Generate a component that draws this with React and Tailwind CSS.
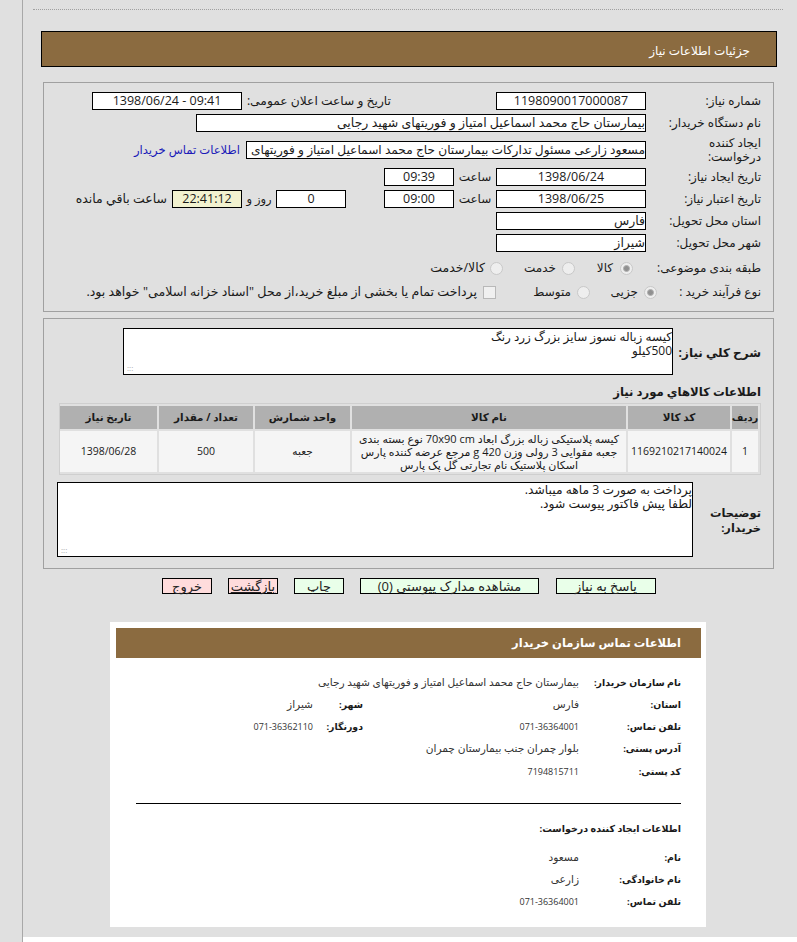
const Box = ({ w, children, align = "center", bg = "bg-white" }) => (
  <div className={`${w} h-[18px] shrink-0 border border-black ${bg} text-[12.5px] leading-[16px] overflow-hidden whitespace-nowrap ${align === "center" ? "text-center" : "text-right"}`}>
    {children}
  </div>
);

const Radio = ({ checked }) => (
  <span className="w-[13px] h-[13px] shrink-0 rounded-full border border-[#c8c8c8] bg-[#eeeeee] flex items-center justify-center">
    {checked && <span className="w-[7px] h-[7px] rounded-full bg-[#909090] border border-[#b0b0b0]" />}
  </span>
);

const Label = ({ children }) => <div className="w-[115px] shrink-0 text-right">{children}</div>;

const Row = ({ className = "", children }) => <div className={`flex items-center h-[18px] ${className}`}>{children}</div>;

const Btn = ({ w, pink, children }) => (
  <div className={`${w} h-[16px] border border-black ${pink ? "bg-[#ffdcdc]" : "bg-[#e9ffe9]"} text-center text-[13px] leading-[14px] text-[#222]`}>{children}</div>
);

const Th = ({ w, children }) => (
  <div className={`${w} shrink-0 h-[23px] bg-[#b0b0b0] flex items-center justify-center font-bold text-[10.4px] whitespace-nowrap`}>{children}</div>
);
const Td = ({ w, children, small }) => (
  <div className={`${w} shrink-0 h-[41px] bg-[#f5f5f5] flex items-center justify-center text-center ${small ? "text-[11px] leading-[13px]" : "text-[10.5px]"}`}>{children}</div>
);

const Info = ({ label, value, num, labelW = "w-[102px]", className = "" }) => (
  <div className={`flex items-center h-[14px] ${className}`}>
    <div className={`${labelW} shrink-0 font-bold text-[9.4px]`}>{label}</div>
    <div className={`text-[#333] whitespace-nowrap ${num ? "text-[9px]" : "text-[10.6px]"}`}>{value}</div>
  </div>
);

export default function App() {
  return (
    <div dir="rtl" className="w-[797px] h-[942px] overflow-hidden bg-[#e0e0e0] text-[12px] text-[#1a1a1a]" style={{ fontFamily: '"Open Sans", "DejaVu Sans", sans-serif' }}>
      <div className="ml-[22px] h-[942px] border-l border-[#a8a8a8] bg-white">
        <div className="h-[937px] bg-[#e0e0e0] pt-[9px] pl-[10px] pr-[14px]">
          <div className="border-t border-dotted border-[#a0a0a0]" />

          <div className="mt-[21px] mr-[6px] ml-[8px] h-[36px] bg-[#8b6b40] border border-black flex items-center pr-[26px] text-white text-[12px] pt-[3px]">
            جزئیات اطلاعات نیاز
          </div>

          <div className="mt-[15px] mr-[9px] ml-[10px] h-[230px] border border-[#a0a0a0] pt-[9px] pr-[12px]">
            <Row>
              <Label>شماره نیاز:</Label>
              <Box w="w-[150px]">1198090017000087</Box>
              <div className="w-[254px] shrink-0 pr-[105px] text-right text-[12.25px] whitespace-nowrap">تاریخ و ساعت اعلان عمومی:</div>
              <Box w="w-[150px]"><span dir="ltr">1398/06/24 - 09:41</span></Box>
            </Row>
            <Row className="mt-[4px]">
              <Label>نام دستگاه خریدار:</Label>
              <Box w="w-[450px]" align="right">بیمارستان حاج محمد اسماعیل امتیاز و فوریتهای شهید رجایی</Box>
            </Row>
            <Row className="mt-[9px]">
              <div className="w-[115px] shrink-0 text-right leading-[14px] pl-[25px]">ایجاد کننده درخواست:</div>
              <Box w="w-[400px]" align="right"><span className="text-[12.2px]">مسعود زارعی مسئول تدارکات بیمارستان حاج محمد اسماعیل امتیاز و فوریتهای</span></Box>
              <div className="mr-[6px] text-[#1a1ab8] text-[11.6px] whitespace-nowrap">اطلاعات تماس خریدار</div>
            </Row>
            <Row className="mt-[9px]">
              <Label>تاریخ ایجاد نیاز:</Label>
              <Box w="w-[150px]">1398/06/24</Box>
              <div className="w-[42px] shrink-0 text-center">ساعت</div>
              <Box w="w-[70px]">09:39</Box>
            </Row>
            <Row className="mt-[4px]">
              <Label>تاریخ اعتبار نیاز:</Label>
              <Box w="w-[150px]">1398/06/25</Box>
              <div className="w-[42px] shrink-0 text-center">ساعت</div>
              <Box w="w-[70px]">09:00</Box>
              <div className="w-[38px] shrink-0" />
              <Box w="w-[70px]">0</Box>
              <div className="w-[34px] shrink-0 text-center text-[11.5px]">روز و</div>
              <Box w="w-[70px]" bg="bg-[#f2f2d0]">22:41:12</Box>
              <div className="mr-[5px] text-[12.5px] whitespace-nowrap">ساعت باقي مانده</div>
            </Row>
            <Row className="mt-[4px]">
              <Label>استان محل تحویل:</Label>
              <Box w="w-[150px]" align="right">فارس</Box>
            </Row>
            <Row className="mt-[4px]">
              <Label>شهر محل تحویل:</Label>
              <Box w="w-[150px]" align="right">شیراز</Box>
            </Row>
            <Row className="mt-[7px]">
              <Label>طبقه بندی موضوعی:</Label>
              <div className="w-[13px] shrink-0" />
              <Radio checked />
              <div className="w-[38px] shrink-0 mr-[7px]">کالا</div>
              <Radio />
              <div className="w-[53px] shrink-0 mr-[6px]">خدمت</div>
              <Radio />
              <div className="mr-[5px] text-[12.5px] whitespace-nowrap">کالا/خدمت</div>
            </Row>
            <Row className="mt-[6px]">
              <div className="w-[104px] shrink-0 text-right">نوع فرآیند خرید :</div>
              <Radio checked />
              <div className="w-[48px] shrink-0 mr-[6px]">جزیی</div>
              <Radio />
              <div className="w-[75px] shrink-0 mr-[6px]">متوسط</div>
              <div className="w-[13px] h-[13px] shrink-0 border border-[#b8b8b8] bg-[#f0f0f0]" />
              <div className="mr-[6px] text-[12.6px] whitespace-nowrap">پرداخت تمام یا بخشی از مبلغ خرید،از محل "اسناد خزانه اسلامی" خواهد بود.</div>
            </Row>
          </div>

          <div className="mt-[6px] mr-[9px] ml-[10px] h-[251px] border border-[#a0a0a0] pt-[9px] pr-[12px]">
            <div className="flex items-center h-[47px]">
              <div className="w-[88px] shrink-0 font-bold text-[12px] whitespace-nowrap pt-[2px]">شرح کلي نیاز:</div>
              <div className="relative w-[550px] h-[47px] border border-black bg-white leading-[14px] text-right pt-[1px]">
                کیسه زباله نسوز سایز بزرگ زرد رنگ
                <br />
                500کیلو
                <span className="absolute left-[3px] bottom-[2px] text-[8px] leading-[8px] text-[#aaa]">:::</span>
              </div>
            </div>
            <div className="mt-[8px] h-[16px] font-bold text-[11.7px] leading-[16px]">اطلاعات کالاهاي مورد نیاز</div>
            <div className="mt-[4px] ml-[15px] h-[72px] border border-[#cfcfcf] pt-[2px] pr-[2px]">
              <div className="flex gap-[2px]">
                <Th w="w-[26px]"><span className="text-[10px]">ردیف</span></Th>
                <Th w="w-[102px]">کد کالا</Th>
                <Th w="w-[274px]">نام کالا</Th>
                <Th w="w-[95px]">واحد شمارش</Th>
                <Th w="w-[94px]">تعداد / مقدار</Th>
                <Th w="w-[97px]">تاریخ نیاز</Th>
              </div>
              <div className="flex gap-[2px] mt-[2px]">
                <Td w="w-[26px]">1</Td>
                <Td w="w-[102px]"><span dir="ltr">1169210217140024</span></Td>
                <Td w="w-[274px]" small>کیسه پلاستیکی زباله بزرگ ابعاد 70x90 cm نوع بسته بندی جعبه مقوایی 3 رولی وزن 420 g مرجع عرضه کننده پارس اسکان پلاستیک نام تجارتی گل پک پارس</Td>
                <Td w="w-[95px]">جعبه</Td>
                <Td w="w-[94px]">500</Td>
                <Td w="w-[97px]">1398/06/28</Td>
              </div>
            </div>
            <div className="flex items-center mt-[6px] h-[76px]">
              <div className="w-[68px] shrink-0 font-bold text-[11.4px] leading-[15px] pl-[8px] pt-[1px]">توضیحات خریدار:</div>
              <div className="relative w-[636px] h-[75px] border border-black bg-white text-[12.3px] leading-[14px] text-right">
                پرداخت به صورت 3 ماهه میباشد.
                <br />
                لطفا پیش فاکتور پیوست شود.
                <span className="absolute left-[3px] bottom-[2px] text-[8px] leading-[8px] text-[#aaa]">:::</span>
              </div>
            </div>
          </div>

          <div className="mt-[9px] mr-[127px] flex">
            <Btn w="w-[100px]">پاسخ به نیاز</Btn>
            <div className="w-[17px]" />
            <Btn w="w-[179px]">مشاهده مدارک پیوستي (0)</Btn>
            <div className="w-[16px]" />
            <Btn w="w-[50px]">چاپ</Btn>
            <div className="w-[16px]" />
            <Btn w="w-[50px]" pink><span className="underline">بازگشت</span></Btn>
            <div className="w-[16px]" />
            <Btn w="w-[50px]" pink>خروج</Btn>
          </div>

          <div className="mt-[28px] mr-[77px] w-[596px] h-[305px] bg-white pt-[6px] pr-[5px] pl-[6px]">
            <div className="h-[30px] bg-[#8b6b40] flex items-center pr-[20px] text-white font-bold text-[11.5px]">اطلاعات تماس سازمان خریدار</div>
            <div className="pr-[20px] pl-[20px] pt-[18px]">
              <Info label="نام سازمان خریدار:" value="بیمارستان حاج محمد اسماعیل امتیاز و فوریتهای شهید رجایی" />
              <div className="flex mt-[8px]">
                <Info className="w-[318px]" label="استان:" value="فارس" />
                <Info labelW="w-[50px]" label="شهر:" value="شیراز" />
              </div>
              <div className="flex mt-[8px]">
                <Info className="w-[318px]" label="تلفن تماس:" value="071-36364001" num />
                <Info labelW="w-[50px]" label="دورنگار:" value="071-36362110" num />
              </div>
              <Info className="mt-[8px]" label="آدرس پستی:" value="بلوار چمران جنب بیمارستان چمران" />
              <Info className="mt-[9px]" label="کد پستی:" value="7194815711" num />
              <div className="mt-[24px] border-t border-black" />
              <div className="mt-[18px] h-[14px] font-bold text-[9.5px]">اطلاعات ایجاد کننده درخواست:</div>
              <Info className="mt-[15px]" label="نام:" value="مسعود" />
              <Info className="mt-[8px]" label="نام خانوادگی:" value="زارعی" />
              <Info className="mt-[8px]" label="تلفن تماس:" value="071-36364001" num />
            </div>
          </div>
        </div>
      </div>
    </div>
  );
}
